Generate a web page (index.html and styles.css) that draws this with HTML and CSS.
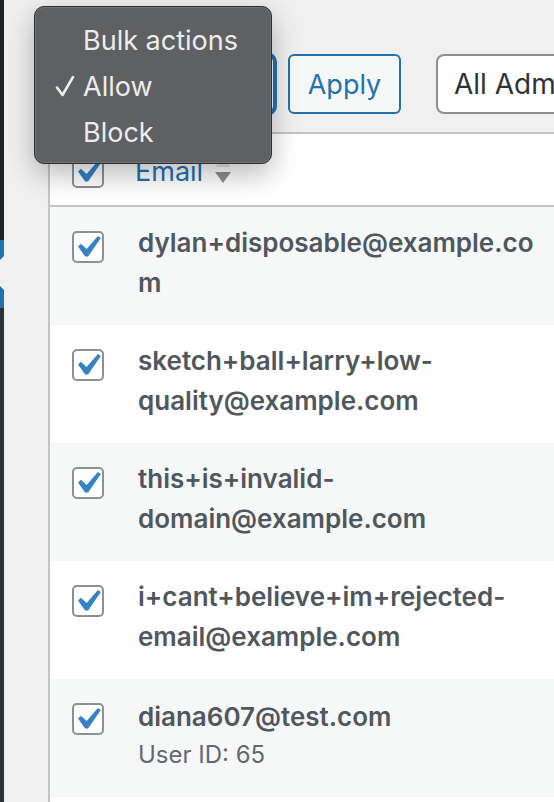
FILE: index.html
```html
<!DOCTYPE html>
<html lang="en">
<head>
<meta charset="utf-8">
<title>Email list</title>
<link rel="stylesheet" href="styles.css">
</head>
<body>
<div class="screen">
  <aside class="adminmenu">
    <div class="seg-top"></div>
    <div class="seg-current"></div>
    <div class="seg-rest"></div>
  </aside>

  <main class="content">
    <div class="tablenav">
      <div class="select select-bulk">Bulk actions</div>
      <button class="button" type="button">Apply</button>
      <div class="select select-filter">All Administrators</div>
    </div>

    <div class="list">
      <div class="thead">
        <span class="cb"><svg viewBox="3.96 3.53 12.73 12.73"><path d="M14.83 4.89l1.34.94-5.81 8.38H9.02L5.78 9.67l1.34-1.25 2.57 2.4z"/></svg></span>
        <span class="th-label">Email</span>
        <span class="sort">
          <span class="sort-up"></span>
          <span class="sort-down"></span>
        </span>
      </div>

      <div class="row">
        <span class="cb"><svg viewBox="3.96 3.53 12.73 12.73"><path d="M14.83 4.89l1.34.94-5.81 8.38H9.02L5.78 9.67l1.34-1.25 2.57 2.4z"/></svg></span>
        <div class="cell"><strong class="email">dylan+disposable@example.com</strong></div>
      </div>
      <div class="row">
        <span class="cb"><svg viewBox="3.96 3.53 12.73 12.73"><path d="M14.83 4.89l1.34.94-5.81 8.38H9.02L5.78 9.67l1.34-1.25 2.57 2.4z"/></svg></span>
        <div class="cell"><strong class="email">sketch+ball+larry+low-quality@example.com</strong></div>
      </div>
      <div class="row">
        <span class="cb"><svg viewBox="3.96 3.53 12.73 12.73"><path d="M14.83 4.89l1.34.94-5.81 8.38H9.02L5.78 9.67l1.34-1.25 2.57 2.4z"/></svg></span>
        <div class="cell"><strong class="email">this+is+invalid-domain@example.com</strong></div>
      </div>
      <div class="row">
        <span class="cb"><svg viewBox="3.96 3.53 12.73 12.73"><path d="M14.83 4.89l1.34.94-5.81 8.38H9.02L5.78 9.67l1.34-1.25 2.57 2.4z"/></svg></span>
        <div class="cell"><strong class="email">i+cant+believe+im+rejected-email@example.com</strong></div>
      </div>
      <div class="row">
        <span class="cb"><svg viewBox="3.96 3.53 12.73 12.73"><path d="M14.83 4.89l1.34.94-5.81 8.38H9.02L5.78 9.67l1.34-1.25 2.57 2.4z"/></svg></span>
        <div class="cell cell-user"><strong class="email">diana607@test.com</strong><div class="meta">User ID: 65</div></div>
      </div>
      <div class="row"></div>
    </div>
  </main>

  <div class="menu">
    <div class="menu-item"><span class="tick"></span>Bulk actions</div>
    <div class="menu-item"><span class="tick"><svg viewBox="0 0 20 22"><path d="M2 12.5 L7.5 20 L18 2"/></svg></span>Allow</div>
    <div class="menu-item"><span class="tick"></span>Block</div>
  </div>
</div>
</body>
</html>
```
FILE: styles.css
```css
* { box-sizing: border-box; }

html, body {
  margin: 0;
  padding: 0;
}

body {
  background: #f0f0f1;
  font-family: Inter, "Noto Sans", "Liberation Sans", sans-serif;
  width: 554px;
  height: 802px;
  overflow: hidden;
}

.screen {
  position: relative;
  display: flex;
  width: 554px;
  height: 802px;
  overflow: hidden;
}

/* admin menu sliver */
.adminmenu {
  width: 4px;
  flex: none;
  display: flex;
  flex-direction: column;
}
.seg-top { height: 240px; background: #1d2327; }
.seg-current {
  height: 68px;
  background: #2271b1;
  position: relative;
}
.seg-current::after {
  content: "";
  position: absolute;
  right: 0;
  top: 16px;
  border-right: 17px solid #f0f0f1;
  border-top: 17px solid transparent;
  border-bottom: 17px solid transparent;
}
.seg-rest { flex: 1; background: #2c3338; }

/* main */
.content {
  flex: 1;
  min-width: 0;
  padding-left: 44px;
}

.tablenav {
  height: 132px;
  padding-top: 54px;
  display: flex;
  align-items: flex-start;
  white-space: nowrap;
}

.select {
  flex: none;
  height: 60px;
  border: 2px solid #8c8f94;
  border-radius: 8px;
  background: #fff;
  color: #2c3338;
  font-size: 28px;
  padding: 0 16px;
  display: flex;
  align-items: center;
}
.select-bulk {
  width: 227px;
  border-color: #2271b1;
  box-shadow: 0 0 0 2px #2271b1;
}
.select-filter {
  margin-left: 35px;
  width: 320px;
}

.button {
  flex: none;
  margin-left: 13px;
  width: 113px;
  height: 60px;
  border: 2px solid #2271b1;
  border-radius: 6px;
  background: #f6f7f7;
  color: #2271b1;
  font-family: inherit;
  font-size: 27px;
  padding: 0;
}

/* list table */
.list {
  border-left: 2px solid #c3c4c7;
  border-top: 2px solid #c3c4c7;
  background: #fff;
}

.cb {
  flex: none;
  display: block;
  width: 32px;
  height: 32px;
  border: 2px solid #8c8f94;
  border-radius: 5px;
  background: #fff;
  margin-left: 22px;
}
.cb svg {
  display: block;
  width: 28px;
  height: 28px;
  fill: #3582c4;
}

.thead {
  height: 73px;
  border-bottom: 2px solid #c3c4c7;
  display: flex;
  align-items: flex-start;
  padding-top: 22px;
}
.th-label {
  margin-left: 31px;
  color: #2271b1;
  font-size: 27px;
  line-height: 32px;
}
.sort {
  margin-left: 12px;
  display: flex;
  flex-direction: column;
  align-items: center;
  padding-top: 1px;
}
.sort-up {
  width: 0;
  height: 0;
  border-left: 8px solid transparent;
  border-right: 8px solid transparent;
  border-bottom: 10px solid #e4e4e6;
  margin-bottom: 5px;
}
.sort-down {
  width: 0;
  height: 0;
  border-left: 8px solid transparent;
  border-right: 8px solid transparent;
  border-top: 11px solid #8c8f94;
}

.row {
  height: 118px;
  display: flex;
  align-items: flex-start;
  padding-top: 16px;
}
.row .cb { margin-top: 8px; }
.row:nth-child(even) { background: #f6f7f7; }

.cell {
  margin-left: 34px;
  width: 400px;
  color: #50575e;
}
.cell-user { padding-top: 2px; }
.email {
  display: block;
  font-size: 26px;
  font-weight: 600;
  line-height: 40px;
  overflow-wrap: anywhere;
}
.meta {
  font-size: 24px;
  line-height: 36px;
  color: #646970;
}

/* native popup menu */
.menu {
  position: absolute;
  left: 34px;
  top: 6px;
  width: 238px;
  height: 158px;
  padding-top: 10px;
  background: #5e6062;
  border: 1px solid #2e2f30;
  border-radius: 10px;
  box-shadow: inset 0 0 0 1px rgba(255, 255, 255, 0.12), 0 10px 28px rgba(0, 0, 0, 0.28);
  color: #ececec;
  font-size: 27px;
}
.menu-item {
  height: 46px;
  display: flex;
  align-items: center;
}
.tick {
  width: 48px;
  flex: none;
  padding-left: 20px;
}
.tick svg {
  display: block;
  width: 20px;
  height: 22px;
  fill: none;
  stroke: #ececec;
  stroke-width: 2.6;
  stroke-linecap: round;
  stroke-linejoin: round;
}
```
